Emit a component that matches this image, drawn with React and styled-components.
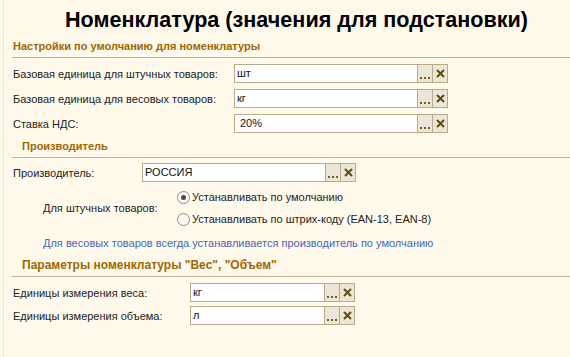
import React from "react";
import styled, { createGlobalStyle } from "styled-components";

const Global = createGlobalStyle`
  html, body { margin: 0; padding: 0; background: #FFFAEC; }
  body { font-family: Arial, "Liberation Sans", sans-serif; font-size: 11px; color: #1a1a1a; }
  * { box-sizing: border-box; }
`;

const Page = styled.div`
  width: 570px;
  height: 357px;
  margin-left: 3px;
  border-left: 1px solid #EEE6D0;
  display: flex;
  flex-direction: column;
  overflow: hidden;
`;

const Title = styled.h1`
  margin: 0;
  height: 38px;
  padding-left: 61px;
  padding-top: 1px;
  display: flex;
  align-items: center;
  font-family: Arial, "Liberation Sans", sans-serif;
  font-weight: bold;
  font-size: 21.6px;
  color: #000;
`;

const SectionHeader = styled.div`
  margin-top: ${p => p.$mt || 0}px;
  margin-left: 8px;
  padding-left: ${p => p.$indent}px;
  padding-bottom: 3px;
  height: 20px;
  border-bottom: 1px solid #BFB591;
  font-weight: bold;
  font-size: ${p => p.$size || 11}px;
  line-height: 16px;
  color: #A06600;
  white-space: nowrap;
`;

const Row = styled.div`
  display: flex;
  align-items: center;
  height: 19px;
  margin-top: ${p => p.$mt || 0}px;
  padding-left: 9px;
`;

const Label = styled.div`
  width: ${p => p.$w}px;
  flex: none;
  white-space: nowrap;
  font-size: 11px;
  color: #222;
`;

const Field = styled.div`
  display: flex;
  width: ${p => p.$w}px;
  height: 19px;
  border: 1px solid #B6AC88;
  background: #fff;
`;

const Value = styled.div`
  flex: 1;
  padding-left: ${p => p.$pl || 2}px;
  font-size: 11px;
  line-height: 17px;
  color: #111;
  white-space: nowrap;
`;

const Btn = styled.div`
  width: 15px;
  flex: none;
  border-left: 1px solid #B6AC88;
  background: #ECE6D8;
  display: flex;
  align-items: ${p => (p.$dots ? "flex-end" : "center")};
  justify-content: center;
  padding-bottom: ${p => (p.$dots ? 3 : 0)}px;
`;

const Dots = () => (
  <svg width="11" height="2" viewBox="0 0 11 2">
    <rect x="0" y="0" width="2" height="2" fill="#7E5E10" />
    <rect x="4" y="0" width="2" height="2" fill="#7E5E10" />
    <rect x="8" y="0" width="2" height="2" fill="#7E5E10" />
  </svg>
);

const Cross = () => (
  <svg width="9" height="9" viewBox="0 0 9 9">
    <path d="M1 1 L8 8 M8 1 L1 8" stroke="#5E4B12" strokeWidth="2" />
  </svg>
);

const Input = ({ value, width, pl }) => (
  <Field $w={width}>
    <Value $pl={pl}>{value}</Value>
    <Btn $dots>
      <Dots />
    </Btn>
    <Btn>
      <Cross />
    </Btn>
  </Field>
);

const RadioBlock = styled.div`
  display: flex;
  align-items: center;
  margin-top: 4px;
  padding-left: 39px;
`;

const RadioList = styled.div`
  display: flex;
  flex-direction: column;
`;

const RadioRow = styled.div`
  display: flex;
  align-items: center;
  height: 22px;
  font-size: 11px;
  color: #222;
  gap: 2px;
`;

const Circle = styled.span`
  width: 13px;
  height: 13px;
  border-radius: 50%;
  border: 1px solid #8E8A80;
  background: #FBFAF6;
  display: flex;
  align-items: center;
  justify-content: center;
  &::after {
    content: "";
    display: ${p => (p.$on ? "block" : "none")};
    width: 5px;
    height: 5px;
    border-radius: 50%;
    background: #4A4A4A;
  }
`;

const Note = styled.div`
  margin-top: 5px;
  padding-left: 39px;
  line-height: 16px;
  font-size: 11px;
  color: #4466BB;
`;

export default function App() {
  return (
    <>
      <Global />
      <Page>
        <Title>Номенклатура (значения для подстановки)</Title>
        <SectionHeader $indent={1}>Настройки по умолчанию для номенклатуры</SectionHeader>
        <Row $mt={6}>
          <Label $w={221}>Базовая единица для штучных товаров:</Label>
          <Input value="шт" width={214} />
        </Row>
        <Row $mt={6}>
          <Label $w={221}>Базовая единица для весовых товаров:</Label>
          <Input value="кг" width={214} />
        </Row>
        <Row $mt={6}>
          <Label $w={221}>Ставка НДС:</Label>
          <Input value="20%" width={214} pl={5} />
        </Row>
        <SectionHeader $indent={10} $mt={5}>Производитель</SectionHeader>
        <Row $mt={5}>
          <Label $w={129}>Производитель:</Label>
          <Input value="РОССИЯ" width={214} />
        </Row>
        <RadioBlock>
          <Label $w={134}>Для штучных товаров:</Label>
          <RadioList>
            <RadioRow>
              <Circle $on />
              Устанавливать по умолчанию
            </RadioRow>
            <RadioRow>
              <Circle />
              Устанавливать по штрих-коду (EAN-13, EAN-8)
            </RadioRow>
          </RadioList>
        </RadioBlock>
        <Note>Для весовых товаров всегда устанавливается производитель по умолчанию</Note>
        <SectionHeader $indent={10} $mt={6} $size={12}>Параметры номенклатуры "Вес", "Объем"</SectionHeader>
        <Row $mt={6}>
          <Label $w={177}>Единицы измерения веса:</Label>
          <Input value="кг" width={165} />
        </Row>
        <Row $mt={4}>
          <Label $w={177}>Единицы измерения объема:</Label>
          <Input value="л" width={165} />
        </Row>
      </Page>
    </>
  );
}
